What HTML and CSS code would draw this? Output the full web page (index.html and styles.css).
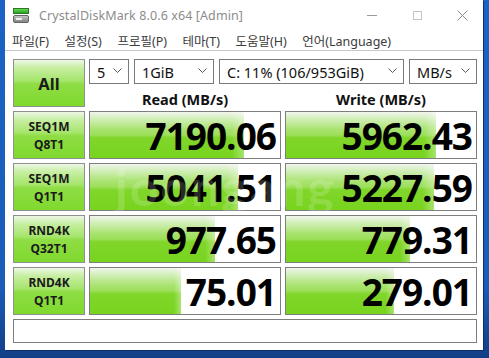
FILE: index.html
```html
<!DOCTYPE html>
<html lang="ko">
<head>
<meta charset="utf-8">
<title>CrystalDiskMark</title>
<link rel="stylesheet" href="styles.css">
</head>
<body>
<div class="window">
  <div class="titlebar">
    <svg class="appicon" width="16" height="15" viewBox="0 0 16 15">
      <defs>
        <linearGradient id="g1" x1="0" y1="0" x2="0" y2="1">
          <stop offset="0" stop-color="#6fe04a"/>
          <stop offset="1" stop-color="#1f9a2a"/>
        </linearGradient>
        <linearGradient id="g2" x1="0" y1="0" x2="0" y2="1">
          <stop offset="0" stop-color="#c9c9c9"/>
          <stop offset="1" stop-color="#7d7d7d"/>
        </linearGradient>
      </defs>
      <rect x="0.5" y="0.5" width="15" height="5" fill="url(#g1)" stroke="#2b7a2b" stroke-width="1"/>
      <rect x="0.5" y="7.5" width="15" height="7" rx="1.5" fill="url(#g2)" stroke="#666" stroke-width="1"/>
      <rect x="3" y="10" width="6" height="2" fill="#eee"/>
    </svg>
    <span class="title">CrystalDiskMark 8.0.6 x64 [Admin]</span>
    <div class="winbtns">
      <svg width="11" height="11" viewBox="0 0 11 11"><line x1="0" y1="5.5" x2="10" y2="5.5" stroke="#9a9a9a" stroke-width="1"/></svg>
      <svg width="11" height="11" viewBox="0 0 11 11"><rect x="1.5" y="1.5" width="8" height="8" fill="none" stroke="#c4c4c4" stroke-width="1"/></svg>
      <svg width="11" height="11" viewBox="0 0 11 11"><path d="M0.5 0.5 L10.5 10.5 M10.5 0.5 L0.5 10.5" stroke="#8a8a8a" stroke-width="1"/></svg>
    </div>
  </div>
  <div class="menubar">
    <span>파일(F)</span>
    <span>설정(S)</span>
    <span>프로필(P)</span>
    <span>테마(T)</span>
    <span>도움말(H)</span>
    <span>언어(Language)</span>
  </div>
  <div class="content">
    <div class="grid">
      <div class="btn allbtn">All</div>
      <div class="topcell">
        <div class="combos">
          <div class="combo c1"><span>5</span><svg class="chev" width="9" height="5" viewBox="0 0 9 5"><path d="M0.5 0.5 L4.5 4.5 L8.5 0.5" fill="none" stroke="#555" stroke-width="1"/></svg></div>
          <div class="combo c2"><span>1GiB</span><svg class="chev" width="9" height="5" viewBox="0 0 9 5"><path d="M0.5 0.5 L4.5 4.5 L8.5 0.5" fill="none" stroke="#555" stroke-width="1"/></svg></div>
          <div class="combo c3"><span>C: 11% (106/953GiB)</span><svg class="chev" width="9" height="5" viewBox="0 0 9 5"><path d="M0.5 0.5 L4.5 4.5 L8.5 0.5" fill="none" stroke="#555" stroke-width="1"/></svg></div>
          <div class="combo c4"><span>MB/s</span><svg class="chev" width="9" height="5" viewBox="0 0 9 5"><path d="M0.5 0.5 L4.5 4.5 L8.5 0.5" fill="none" stroke="#555" stroke-width="1"/></svg></div>
        </div>
        <div class="heads">
          <div class="head">Read (MB/s)</div>
          <div class="head">Write (MB/s)</div>
        </div>
      </div>

      <div class="btn label">SEQ1M<br>Q8T1</div>
      <div class="result"><div class="bar" style="width:81%"></div><span class="val">7190.06</span></div>
      <div class="result"><div class="bar" style="width:79%"></div><span class="val">5962.43</span></div>

      <div class="btn label">SEQ1M<br>Q1T1</div>
      <div class="result"><div class="bar" style="width:78%"></div><span class="val">5041.51</span></div>
      <div class="result"><div class="bar" style="width:78%"></div><span class="val">5227.59</span></div>

      <div class="btn label">RND4K<br>Q32T1</div>
      <div class="result"><div class="bar" style="width:66%"></div><span class="val">977.65</span></div>
      <div class="result"><div class="bar" style="width:65%"></div><span class="val">779.31</span></div>

      <div class="btn label">RND4K<br>Q1T1</div>
      <div class="result"><div class="bar" style="width:48%"></div><span class="val">75.01</span></div>
      <div class="result"><div class="bar" style="width:57%"></div><span class="val">279.01</span></div>

      <div class="comment"></div>
    </div>
    <div class="watermark">joongang</div>
  </div>
</div>
</body>
</html>
```
FILE: styles.css
```css
html, body {
  margin: 0;
  padding: 0;
}
body {
  width: 489px;
  height: 358px;
  overflow: hidden;
  background: linear-gradient(to bottom, #1a63c4 0%, #1a5cb8 80%, #123f86 100%);
  font-family: "Noto Sans", "Noto Sans CJK KR", sans-serif;
}
.window {
  margin-left: 5px;
  width: 478px;
  height: 350px;
  background: #ffffff;
  box-shadow: 1px 1px 0 #0c2f6a;
  display: flex;
  flex-direction: column;
}
.titlebar {
  flex-shrink: 0;
  height: 30px;
  display: flex;
  align-items: center;
  padding-left: 8px;
}
.appicon {
  display: block;
  margin-top: 1px;
}
.title {
  margin-left: 10px;
  font-size: 12.5px;
  color: #8c8c8c;
  letter-spacing: 0.1px;
}
.winbtns {
  margin-left: auto;
  display: flex;
  gap: 34px;
  padding-right: 15px;
  align-items: center;
}
.winbtns svg {
  display: block;
}
.menubar {
  flex-shrink: 0;
  height: 20px;
  display: flex;
  align-items: center;
  gap: 15.5px;
  padding-left: 7px;
  font-size: 12.5px;
  color: #3c3c3c;
  border-bottom: 1px solid #c8c8c8;
}
.content {
  position: relative;
  padding: 8px 0 0 8px;
}
.grid {
  display: grid;
  grid-template-columns: 72px 192px 192px;
  grid-template-rows: 48px 48px 48px 48px 48px 24px;
  column-gap: 4px;
  row-gap: 4px;
}
.btn {
  box-sizing: border-box;
  border: 1px solid #8f8f8f;
  background: linear-gradient(to bottom, #eef8e6 0%, #c6eea0 18%, #a6e56c 45%, #8fdd44 52%, #7fd92e 100%);
  display: flex;
  align-items: center;
  justify-content: center;
  text-align: center;
  color: #1a1a1a;
  font-weight: 700;
}
.allbtn {
  font-size: 16.5px;
}
.label {
  font-size: 12px;
  line-height: 18px;
  padding-top: 1px;
}
.topcell {
  grid-column: 2 / 4;
  display: flex;
  flex-direction: column;
}
.combos {
  display: flex;
  gap: 5px;
  height: 25px;
}
.combo {
  box-sizing: border-box;
  height: 25px;
  border: 1px solid #7a7a7a;
  background: #fff;
  display: flex;
  align-items: center;
  padding: 0 6px 0 7px;
  font-size: 14.5px;
  color: #111;
}
.combo span {
  flex: 1;
  white-space: nowrap;
}
.chev {
  display: block;
  margin-top: -2px;
}
.c1 { width: 40px; }
.c2 { width: 80px; }
.c3 { flex: 1; }
.c4 { width: 68px; }
.heads {
  display: grid;
  grid-template-columns: 192px 192px;
  column-gap: 4px;
  flex: 1;
}
.head {
  text-align: center;
  font-weight: 700;
  font-size: 14.5px;
  color: #111;
  padding-top: 5px;
}
.result {
  position: relative;
  box-sizing: border-box;
  border: 1px solid #7e7e7e;
  background: #fff;
  display: flex;
  align-items: center;
  justify-content: flex-end;
  overflow: hidden;
}
.bar {
  position: absolute;
  left: 0;
  top: 0;
  bottom: 0;
  background:
    linear-gradient(to right, rgba(255,255,255,0) 92%, rgba(255,255,255,0.35) 100%),
    linear-gradient(to bottom, #f2f5ef 0%, #d3efbb 14%, #a9e36f 38%, #9ddf5a 50%, #80d62a 56%, #78d41e 100%);
}
.val {
  position: relative;
  font-family: "Open Sans", "Noto Sans", sans-serif;
  font-weight: 700;
  font-size: 37px;
  letter-spacing: -1px;
  color: #000;
  padding-right: 4px;
  line-height: 44px;
  margin-top: 1px;
}
.comment {
  grid-column: 1 / 4;
  box-sizing: border-box;
  border: 1px solid #7e7e7e;
  background: #fff;
}
.watermark {
  position: absolute;
  left: 110px;
  top: 106px;
  font-family: "Lato", sans-serif;
  font-size: 50px;
  font-weight: 700;
  letter-spacing: 2px;
  color: rgba(255,255,255,0.16);
  pointer-events: none;
}
```
